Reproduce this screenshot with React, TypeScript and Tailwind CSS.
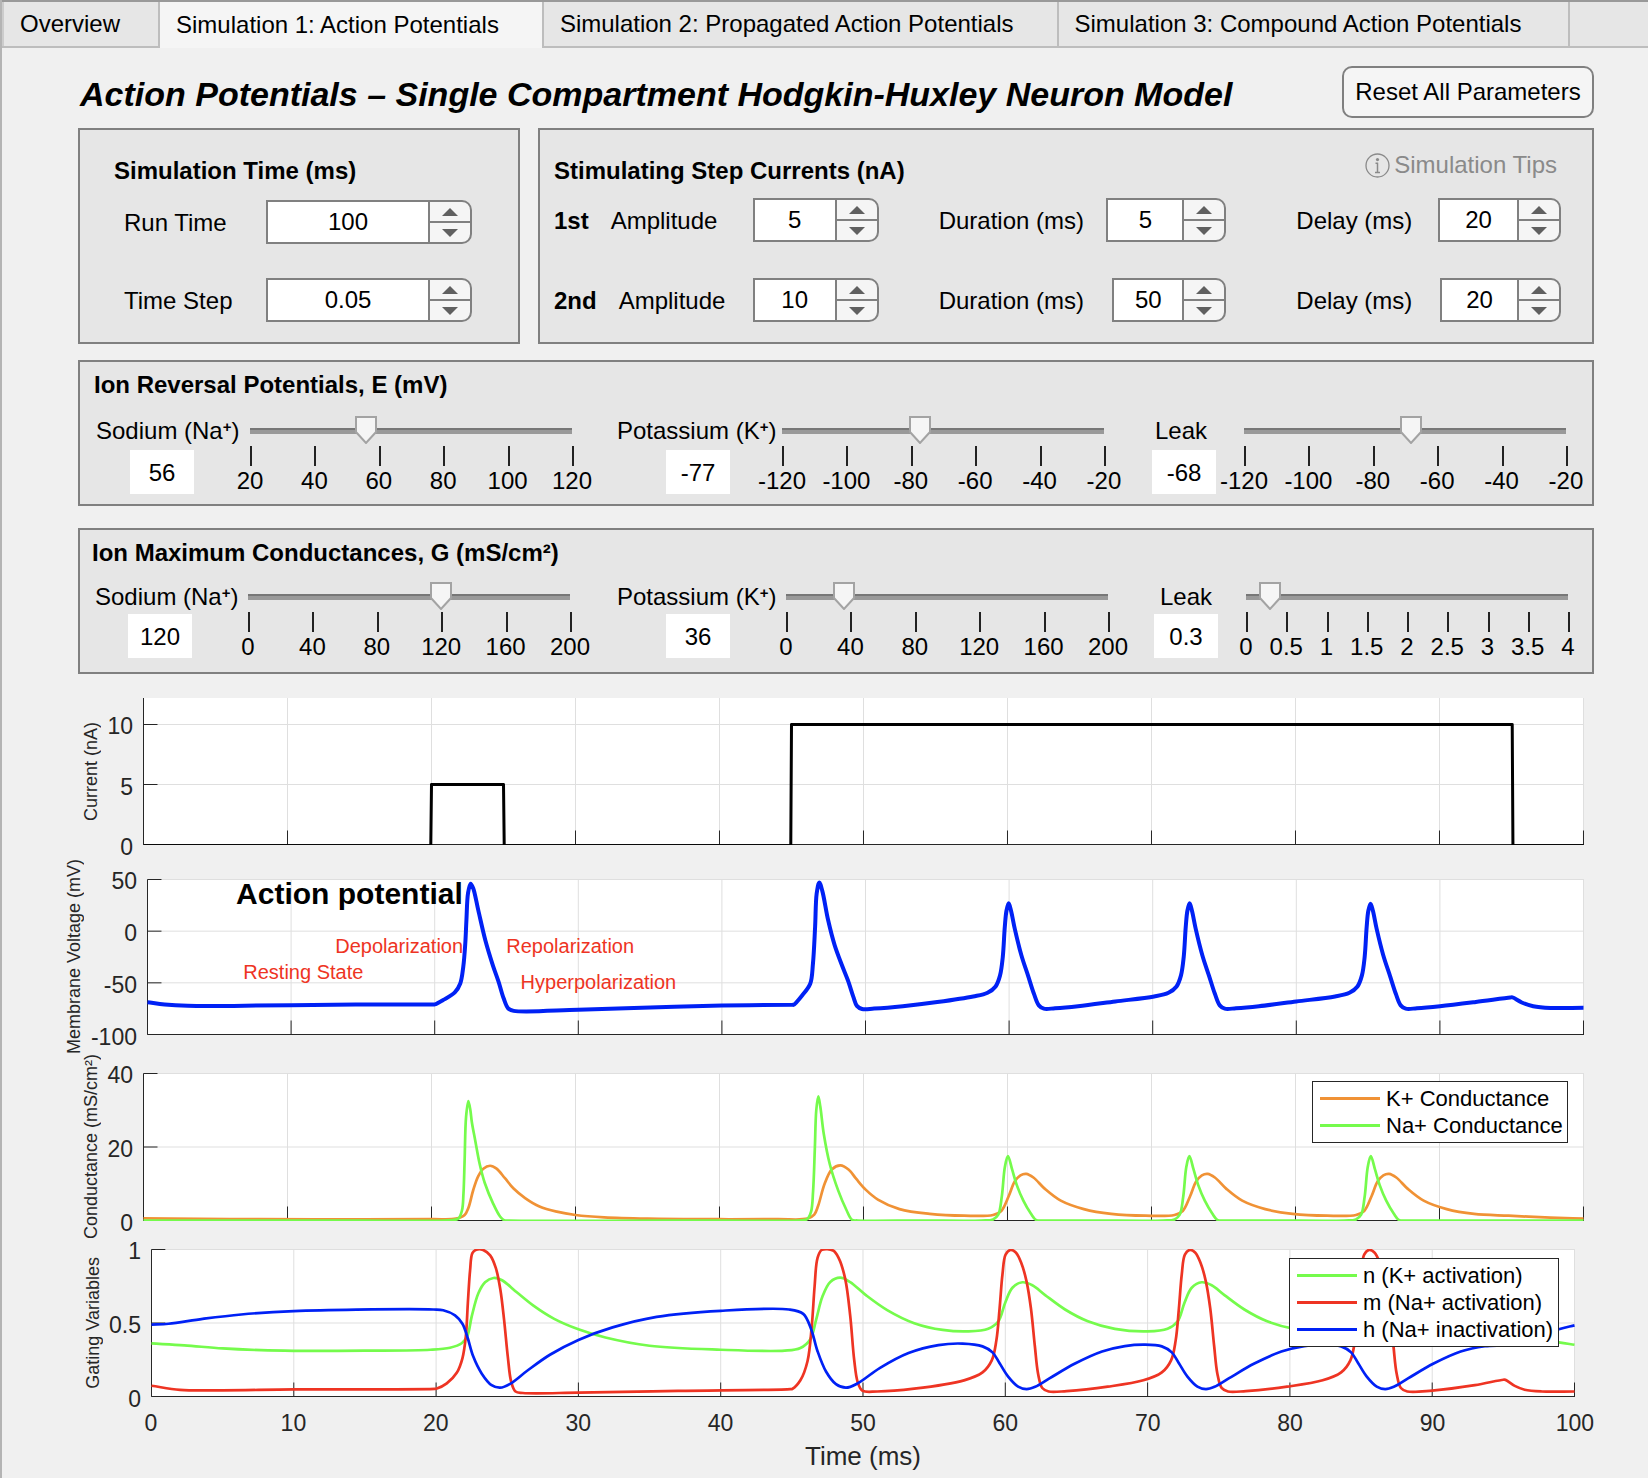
import { useId, useState } from "react";
import type { ReactNode } from "react";

type Point = [number, number];

/* ------------------------------------------------------------------ */
/* Controls                                                            */
/* ------------------------------------------------------------------ */

function Spinner({ id, label, initial, step = 1, width }: { id: string; label: string; initial: number; step?: number; width: string }) {
  const [value, setValue] = useState(initial);
  const change = (delta: number) => setValue((v) => Number((v + delta).toFixed(4)));
  return (
    <div className={`flex h-11 shrink-0 overflow-hidden rounded-r-[10px] border-2 border-[#808080] bg-[#f5f5f5] ${width}`}>
      <input
        id={id}
        type="text"
        inputMode="decimal"
        value={value}
        onChange={(e) => setValue(Number(e.target.value) || 0)}
        className="min-w-0 flex-1 bg-white text-center outline-none"
      />
      <div className="flex w-[42px] flex-col border-l-2 border-[#808080]">
        <button type="button" aria-label={`Increase ${label}`} onClick={() => change(step)} className="flex flex-1 items-center justify-center border-b-2 border-[#808080]">
          <svg width="16" height="8" viewBox="0 0 16 8" aria-hidden="true">
            <path d="M8 0 16 8H0Z" fill="#606060" />
          </svg>
        </button>
        <button type="button" aria-label={`Decrease ${label}`} onClick={() => change(-step)} className="flex flex-1 items-center justify-center">
          <svg width="16" height="8" viewBox="0 0 16 8" aria-hidden="true">
            <path d="M0 0H16L8 8Z" fill="#606060" />
          </svg>
        </button>
      </div>
    </div>
  );
}

function Slider({
  id,
  name,
  min,
  max,
  value,
  step,
  ticks,
  onChange,
}: {
  id: string;
  name: string;
  min: number;
  max: number;
  value: number;
  step: number;
  ticks: number[];
  onChange: (v: number) => void;
}) {
  const share = ((value - min) / (max - min)) * 100;
  return (
    <div className="min-w-0">
      <div className="relative h-7 pt-3">
        <div className="h-1.5 border-t-2 border-[#777777] bg-[#999999]" />
        <svg
          className="pointer-events-none absolute top-0 -ml-[11px]"
          style={{ left: `${share}%` }}
          width="22"
          height="28"
          viewBox="0 0 22 28"
          aria-hidden="true"
        >
          <path d="M1 1H21V16L11 27 1 16Z" fill="#f5f5f5" stroke="#a3a3a3" strokeWidth="2" />
        </svg>
        <input
          id={id}
          aria-label={`${name} slider`}
          type="range"
          min={min}
          max={max}
          step={step}
          value={value}
          onChange={(e) => onChange(Number(e.target.value))}
          className="absolute inset-x-0 top-0 h-7 cursor-pointer appearance-none bg-transparent [&::-webkit-slider-thumb]:h-7 [&::-webkit-slider-thumb]:w-5 [&::-webkit-slider-thumb]:appearance-none [&::-webkit-slider-thumb]:bg-transparent"
        />
      </div>
      <div className="-mr-0.5 flex justify-between pt-0.5">
        {ticks.map((t) => (
          <div key={t} className="flex w-0.5 flex-col items-start">
            <span className="h-5 w-0.5 bg-[#222222]" />
            <span className="flex h-[30px] w-0 items-center justify-center whitespace-nowrap">{t}</span>
          </div>
        ))}
      </div>
    </div>
  );
}

interface Ion {
  label: ReactNode;
  name: string;
  initial: number;
  min: number;
  max: number;
  step: number;
  ticks: number[];
  colClass: string;
  boxClass: string;
}

function IonControl({ ion }: { ion: Ion }) {
  const id = useId();
  const [value, setValue] = useState(ion.initial);
  return (
    <>
      <div className={`flex flex-col ${ion.colClass}`}>
        <label htmlFor={`${id}v`} className="flex h-[30px] items-center whitespace-nowrap">
          {ion.label}
        </label>
        <input
          id={`${id}v`}
          type="text"
          value={value}
          onChange={(e) => setValue(Number(e.target.value) || 0)}
          className={`h-11 w-16 bg-white pt-0.5 text-center outline-none ${ion.boxClass}`}
        />
      </div>
      <Slider id={`${id}s`} name={ion.name} min={ion.min} max={ion.max} step={ion.step} value={value} ticks={ion.ticks} onChange={setValue} />
    </>
  );
}

const sodium = (
  <span>
    Sodium (Na<sup className="text-[15px] font-bold">+</sup>)
  </span>
);
const potassium = (
  <span>
    Potassium (K<sup className="text-[15px] font-bold">+</sup>)
  </span>
);

const negTicks = [-120, -100, -80, -60, -40, -20];
const condTicks = [0, 40, 80, 120, 160, 200];

const reversal: Ion[] = [
  { label: sodium, name: "Sodium reversal potential", initial: 56, min: 20, max: 120, step: 1, ticks: [20, 40, 60, 80, 100, 120], colClass: "", boxClass: "mt-1 ml-[34px]" },
  { label: potassium, name: "Potassium reversal potential", initial: -77, min: -120, max: -20, step: 1, ticks: negTicks, colClass: "pl-[45px]", boxClass: "mt-1 ml-[49px]" },
  { label: <span className="pl-[3px]">Leak</span>, name: "Leak reversal potential", initial: -68, min: -120, max: -20, step: 1, ticks: negTicks, colClass: "pl-12", boxClass: "mt-1" },
];

const conductance: Ion[] = [
  { label: sodium, name: "Sodium conductance", initial: 120, min: 0, max: 200, step: 1, ticks: condTicks, colClass: "", boxClass: "mt-0.5 ml-[33px]" },
  { label: potassium, name: "Potassium conductance", initial: 36, min: 0, max: 200, step: 1, ticks: condTicks, colClass: "pl-[47px]", boxClass: "mt-0.5 ml-[49px]" },
  { label: "Leak", name: "Leak conductance", initial: 0.3, min: 0, max: 4, step: 0.1, ticks: [0, 0.5, 1, 1.5, 2, 2.5, 3, 3.5, 4], colClass: "items-center pl-8 pr-[14px]", boxClass: "mt-0.5" },
];

/* ------------------------------------------------------------------ */
/* Traces: time in ms against value                                    */
/* ------------------------------------------------------------------ */

const PERIOD = 12.6;
const repeat = (pts: Point[], count: number): Point[] =>
  Array.from({ length: count }).flatMap((_, i) => pts.map(([t, v]): Point => [t + i * PERIOD, v]));

const current: Point[] = [
  [0, -0.1], [19.95, -0.1], [20, 5], [25, 5], [25.05, -0.1], [44.95, -0.1], [45, 10], [95.05, 10], [95.1, -0.1], [100, -0.1],
];

const voltage: Point[] = [
  [0, -68.7], [1.2, -70.9], [2.8, -72.2], [6, -72.3], [10, -71.6], [14.5, -71], [19.9, -71], [20, -70.9], [20.6, -66.5], [21.4, -59.3],
  [21.78, -50.6], [21.99, -34.4], [22.13, -11.8], [22.21, 10.9], [22.32, 36.7], [22.5, 46], [22.68, 41.6], [23.03, 20.6],
  [23.53, -9], [24.05, -33], [24.45, -49], [24.8, -65], [25.12, -74.8], [25.5, -77.1], [30, -76.1], [35, -73.9],
  [40, -72], [44.9, -71.3], [45, -71.2], [45.6, -62], [46.15, -50.9], [46.34, -31.5], [46.49, 4], [46.6, 36.4], [46.78, 47.1], [46.99, 39],
  [47.4, 10.5], [47.85, -13.5], [48.36, -33], [48.78, -47.7], [49.16, -63.8], [49.4, -72.3], [49.76, -75.3], [50.6, -74.9],
  [52.6, -72.6], [55, -68.6],
  ...repeat(
    [
      [57.5, -63.2], [58.5, -59.6], [59.06, -53.5], [59.37, -42.8], [59.56, -25], [59.7, 4], [59.82, 20], [59.97, 27],
      [60.13, 20], [60.4, 2], [60.85, -23], [61.33, -43.5], [61.73, -60.6], [62.07, -71.8], [62.42, -75], [63.2, -74.6],
      [64.8, -72.6], [67.4, -68],
    ],
    2,
  ),
  [82.7, -63.2], [83.7, -59.6], [84.26, -53.5], [84.57, -42.8], [84.76, -25], [84.9, 4], [85.02, 20], [85.17, 26.5],
  [85.33, 20], [85.6, 2], [86.05, -23], [86.53, -43.5], [86.93, -60.6], [87.27, -71.8], [87.62, -75], [88.4, -74.6],
  [90, -72.6], [92.5, -68.5], [94.9, -64.2], [95.05, -64.1], [95.7, -69], [96.5, -72.6], [97.7, -74.3], [100, -74.2],
];

const sodiumG: Point[] = [
  [0, 0], [15, 0], [21.2, 0.05], [21.86, 0.5], [22.12, 2.8], [22.22, 7.3], [22.3, 16.4], [22.4, 28.2], [22.56, 32.5], [22.7, 30],
  [22.8, 26.8], [23.03, 21.9], [23.35, 15.3], [23.7, 10.2], [24.28, 4.6], [24.76, 1.1], [25.04, 0.1], [25.4, 0], [40, 0], [45.7, 0.05],
  [46.1, 0.4], [46.36, 2.4], [46.5, 8], [46.62, 19.5], [46.72, 30], [46.86, 33.8], [47, 31], [47.24, 23.6], [47.66, 15.3], [48.24, 8.2],
  [48.8, 3], [49.2, 0.2], [49.6, 0], [54, 0],
  ...repeat(
    [
      [58.2, 0], [59, 0.3], [59.36, 1.6], [59.6, 6.4], [59.82, 14.6], [60.03, 17.5], [60.32, 13.9], [60.64, 9.7], [61.1, 5.4],
      [61.62, 1.9], [62, 0.1], [62.6, 0], [66, 0],
    ],
    3,
  ),
  [100, 0],
];

const potassiumG: Point[] = [
  [0, 0.6], [6, 0.4], [12, 0.3], [20, 0.35], [21.7, 0.5], [22.3, 1.5], [22.56, 3.4], [22.9, 8.3], [23.24, 12], [23.6, 14.1], [24.07, 14.9],
  [24.52, 14.1], [25.1, 11.5], [25.7, 8.7], [26.5, 6.1], [27.5, 3.8], [28.7, 2.4], [30, 1.5], [32, 0.85], [35, 0.5], [40, 0.35],
  [44, 0.35], [46.1, 0.5], [46.58, 1.6], [46.85, 4], [47.3, 10], [47.8, 13.9], [48.4, 15], [48.98, 13.8], [49.5, 11.3], [50.15, 8.4],
  [51, 5.7], [52.5, 3.1], [54.6, 1.8], [57, 1.3],
  ...repeat(
    [
      [59, 1.5], [59.57, 2.6], [60.08, 6.6], [60.5, 10.6], [60.9, 12.3], [61.3, 12.7], [61.8, 11.7], [62.6, 8.6], [63.7, 5.4],
      [65.3, 3.1], [67.2, 1.8], [69.6, 1.3],
    ],
    3,
  ),
  [97.7, 0.8], [100, 0.5],
];

const gateM: Point[] = [
  [0, 0.073], [2, 0.045], [5, 0.042], [10, 0.048], [19.9, 0.052], [20.05, 0.054], [20.75, 0.089], [21.45, 0.161], [21.85, 0.26],
  [22.09, 0.41], [22.23, 0.634], [22.39, 0.86], [22.55, 0.975], [22.82, 0.998], [23.3, 0.997], [23.8, 0.96], [24.2, 0.873],
  [24.52, 0.725], [24.78, 0.52], [25.04, 0.27], [25.28, 0.099], [25.58, 0.034], [26.1, 0.024], [30, 0.026], [37, 0.038],
  [44.9, 0.05], [45.05, 0.053], [45.6, 0.11], [46.1, 0.24], [46.4, 0.48], [46.6, 0.75], [46.8, 0.94], [47.1, 0.997], [47.9, 0.993],
  [48.3, 0.94], [48.75, 0.8], [49.1, 0.55], [49.38, 0.25], [49.62, 0.1], [49.95, 0.04], [51, 0.034], [53.6, 0.053],
  ...repeat(
    [
      [57.1, 0.11], [58.4, 0.164], [59.05, 0.246], [59.37, 0.38], [59.6, 0.6], [59.8, 0.83], [60.02, 0.965], [60.36, 0.997],
      [60.74, 0.98], [61.13, 0.907], [61.5, 0.78], [61.8, 0.6], [62.08, 0.34], [62.3, 0.157], [62.6, 0.058], [63.05, 0.034],
      [64.3, 0.037], [67.2, 0.067],
    ],
    2,
  ),
  [82.3, 0.11], [83.6, 0.164], [84.25, 0.246], [84.57, 0.38], [84.8, 0.6], [85, 0.83], [85.22, 0.965], [85.56, 0.997],
  [85.94, 0.98], [86.33, 0.907], [86.7, 0.78], [87, 0.6], [87.28, 0.34], [87.5, 0.157], [87.8, 0.058], [88.25, 0.034],
  [90, 0.04], [93, 0.077], [95, 0.114], [95.15, 0.113], [95.8, 0.072], [96.5, 0.046], [97.7, 0.034], [100, 0.034],
];

const gateN: Point[] = [
  [0, 0.361], [2.3, 0.348], [5, 0.327], [7.7, 0.315], [10, 0.311], [15, 0.312], [19.6, 0.318], [20.98, 0.332], [21.8, 0.362], [22.2, 0.413],
  [22.5, 0.543], [22.97, 0.702], [23.44, 0.777], [24.03, 0.806], [24.6, 0.793], [25.67, 0.709], [26.84, 0.618], [28.3, 0.528],
  [30, 0.457], [31.9, 0.401], [35, 0.345], [40, 0.318], [44.5, 0.312], [45.6, 0.33], [46.3, 0.39], [46.7, 0.52], [47.15, 0.68], [47.7, 0.779],
  [48.4, 0.808], [49.1, 0.778], [50.2, 0.69], [51.7, 0.588], [53.6, 0.499], [55.6, 0.453], [57.4, 0.443],
  ...repeat(
    [
      [58.8, 0.461], [59.5, 0.51], [60, 0.64], [60.5, 0.74], [61.2, 0.777], [61.9, 0.757], [62.8, 0.69], [64.2, 0.592],
      [65.8, 0.512], [67.7, 0.46], [70, 0.443],
    ],
    2,
  ),
  [84, 0.461], [84.7, 0.51], [85.2, 0.64], [85.7, 0.74], [86.4, 0.777], [87.1, 0.757], [88, 0.69], [89.4, 0.592],
  [91, 0.512], [92.8, 0.464], [95.5, 0.425], [98.9, 0.368], [100, 0.352],
];

const gateH: Point[] = [
  [0, 0.489], [1.2, 0.495], [3.6, 0.528], [6.3, 0.558], [10, 0.581], [14.4, 0.591], [19.8, 0.592], [20.5, 0.587], [21.33, 0.552],
  [21.85, 0.495], [22.2, 0.405], [22.6, 0.275], [23.2, 0.157], [23.9, 0.077], [24.5, 0.06], [25.2, 0.086], [26.4, 0.175],
  [28, 0.284], [30, 0.385], [32.4, 0.47], [35.5, 0.542], [40, 0.583], [44.8, 0.592], [45.8, 0.562], [46.35, 0.46], [46.8, 0.31],
  [47.4, 0.17], [48.1, 0.084], [48.8, 0.06], [49.6, 0.088], [51.2, 0.195], [53.2, 0.296], [55.3, 0.35], [57, 0.36],
  ...repeat(
    [
      [58.4, 0.341], [59.1, 0.3], [59.6, 0.226], [60.2, 0.135], [60.9, 0.067], [61.5, 0.05], [62.1, 0.066], [63.1, 0.123],
      [64.9, 0.224], [66.8, 0.306], [68.4, 0.343], [69.8, 0.353],
    ],
    2,
  ),
  [83.6, 0.341], [84.3, 0.3], [84.8, 0.226], [85.4, 0.135], [86.1, 0.067], [86.7, 0.05], [87.3, 0.066], [88.3, 0.123],
  [90.1, 0.224], [92, 0.306], [93.7, 0.342], [95.4, 0.352], [97, 0.39], [98.9, 0.457], [100, 0.484],
];

/** Centripetal Catmull-Rom curve through points already in drawing units. */
function smoothPath(pts: Point[]): string {
  const n = pts.length;
  const mirror = (a: Point, b: Point): Point => [2 * a[0] - b[0], 2 * a[1] - b[1]];
  const all = [mirror(pts[0], pts[1]), ...pts, mirror(pts[n - 1], pts[n - 2])];
  const root = (a: Point, b: Point) => Math.sqrt(Math.hypot(b[0] - a[0], b[1] - a[1]));
  const handle = (far: Point, near: Point, next: Point): Point => {
    const a = root(far, near);
    const b = root(near, next);
    const k = 2 * a * a + 3 * a * b + b * b;
    const q = 3 * a * (a + b);
    return [(a * a * next[0] - b * b * far[0] + k * near[0]) / q, (a * a * next[1] - b * b * far[1] + k * near[1]) / q];
  };
  const text = (p: Point) => `${p[0].toFixed(2)} ${p[1].toFixed(2)}`;
  let d = `M${text(pts[0])}`;
  for (let i = 1; i < n; i++) {
    const [p0, p1, p2, p3] = [all[i - 1], all[i], all[i + 1], all[i + 2]];
    d += `C${text(handle(p0, p1, p2))} ${text(handle(p3, p2, p1))} ${text(p2)}`;
  }
  return d;
}

/* ------------------------------------------------------------------ */
/* Charts                                                              */
/* ------------------------------------------------------------------ */

interface Series {
  points: Point[];
  color: string;
  weight: number;
  straight?: boolean;
}

const GREEN = "#75fb4c";
const RED = "#ee3423";
const BLUE = "#0021f5";
const ORANGE = "#f09235";
const VIEW = 1440;

function Chart({
  yLabel,
  ticks,
  min,
  height,
  top,
  series,
  rowClass,
  gutterClass,
  tickClass,
  children,
}: {
  yLabel: string;
  ticks: number[];
  min: number;
  height: number;
  top: number;
  series: Series[];
  rowClass: string;
  gutterClass: string;
  tickClass: string;
  children?: ReactNode;
}) {
  const base = height - 0.5;
  const high = ticks[0];
  const y = (v: number) => base - ((v - min) / (high - min)) * (base - top);
  const x = (t: number) => 0.5 + (t / 100) * (VIEW - 1);
  const times = [10, 20, 30, 40, 50, 60, 70, 80, 90, 100];
  return (
    <div className={`flex ${rowClass}`}>
      <div className={`flex shrink-0 justify-between pr-2.5 ${gutterClass}`}>
        <div className="flex w-[22px] items-center justify-center">
          <span className="shrink-0 rotate-180 text-lg leading-[22px] whitespace-nowrap [writing-mode:vertical-rl]">{yLabel}</span>
        </div>
        <div className={`-mb-0.5 flex flex-col justify-between text-right text-[23px] ${tickClass}`}>
          {ticks.map((t) => (
            <span key={t} className="flex h-0 items-center justify-end">
              {t}
            </span>
          ))}
        </div>
      </div>
      <div className="relative min-w-0 flex-1">
        <svg className="block h-full w-full bg-white" viewBox={`0 0 ${VIEW} ${height}`} preserveAspectRatio="none" role="img" aria-label={yLabel}>
          <g stroke="#dfdfdf" strokeWidth="1">
            {times.map((t) => (
              <path key={t} d={`M${x(t)} 0V${height}`} vectorEffect="non-scaling-stroke" />
            ))}
            {ticks.map((t) => (
              <path key={t} d={`M0 ${y(t)}H${VIEW}`} vectorEffect="non-scaling-stroke" />
            ))}
          </g>
          <g stroke="#262626" strokeWidth="1" fill="none">
            <path d={`M0.5 ${y(high) < 10 ? y(high) : 0}V${base}H${VIEW}`} vectorEffect="non-scaling-stroke" />
            {times.map((t) => (
              <path key={t} d={`M${x(t)} ${base}v-14`} vectorEffect="non-scaling-stroke" />
            ))}
            {ticks.map((t) => (
              <path key={t} d={`M0.5 ${y(t)}h14`} vectorEffect="non-scaling-stroke" />
            ))}
          </g>
          {series.map((s, i) => {
            const pts = s.points.map(([t, v]): Point => [x(t), y(v)]);
            return (
              <path
                key={i}
                d={s.straight ? `M${pts.map((p) => p.join(" ")).join("L")}` : smoothPath(pts)}
                fill="none"
                stroke={s.color}
                strokeWidth={s.weight}
                strokeLinejoin="round"
                vectorEffect="non-scaling-stroke"
              />
            );
          })}
        </svg>
        {children}
      </div>
    </div>
  );
}

function Legend({ items, className }: { items: { label: string; color: string }[]; className: string }) {
  return (
    <ul className={`absolute right-4 border border-[#262626] bg-white py-[3px] pl-[7px] text-[22px] leading-[27px] text-black ${className}`}>
      {items.map((item) => (
        <li key={item.label} className="flex h-[27px] items-center gap-1.5 whitespace-nowrap">
          <svg width="60" height="4" viewBox="0 0 60 4" aria-hidden="true">
            <path d="M0 1.5H60" stroke={item.color} strokeWidth="3" />
          </svg>
          {item.label}
        </li>
      ))}
    </ul>
  );
}

/* ------------------------------------------------------------------ */
/* Page                                                                */
/* ------------------------------------------------------------------ */

const tabs = [
  { label: "Overview", className: "border-b-2 pr-[38px]" },
  { label: "Simulation 1: Action Potentials", className: "bg-[#f5f5f5] pr-[43px]" },
  { label: "Simulation 2: Propagated Action Potentials", className: "border-b-2 pr-[43px]" },
  { label: "Simulation 3: Compound Action Potentials", className: "border-b-2 pr-[47px]" },
];

const steps = [
  { name: "1st", amplitude: 5, duration: 5, delay: 20, durationWidth: "w-[120px]", delayWidth: "w-[123px]" },
  { name: "2nd", amplitude: 10, duration: 50, delay: 20, durationWidth: "w-[114px]", delayWidth: "w-[121px]" },
];

const panel = "border-2 border-[#808080] bg-[#e6e6e6]";

export default function App() {
  return (
    <div className="min-h-screen border-l-2 border-[#b4b4b4] bg-[#f0f0f0] font-['Liberation_Sans',Arial,sans-serif] text-2xl leading-7 text-black">
      <nav role="tablist" className="flex h-12 border-t-2 border-[#999999] bg-[#e6e6e6]">
        <div className="w-0.5 border-b-2 border-[#bdbdbd] bg-[#cccccc]" />
        {tabs.map((tab, i) => (
          <button
            key={tab.label}
            type="button"
            role="tab"
            aria-selected={i === 1}
            className={`border-r-2 border-[#bdbdbd] pl-4 whitespace-nowrap ${tab.className}`}
          >
            {tab.label}
          </button>
        ))}
        <div className="flex-1 border-b-2 border-[#bdbdbd]" />
      </nav>

      <main className="pr-[54px] pl-[76px]">
        <header className="flex items-center justify-between pt-[18px]">
          <h1 className="pt-1 pl-0.5 text-[34px] leading-10 font-bold whitespace-nowrap italic">
            Action Potentials – Single Compartment Hodgkin-Huxley Neuron Model
          </h1>
          <button type="button" className="h-[52px] w-[252px] shrink-0 rounded-[10px] border-2 border-[#808080] bg-[#f5f5f5] whitespace-nowrap">
            Reset All Parameters
          </button>
        </header>

        <div className="mt-2.5 grid grid-cols-[442fr_1056fr] gap-[18px]">
          <section className={`min-h-[216px] pt-[27px] pr-[46px] pl-[34px] ${panel}`}>
            <h2 className="font-bold">Simulation Time (ms)</h2>
            <div className="mt-[15px] flex items-center justify-between pl-[10px]">
              <label htmlFor="run-time" className="pt-0.5">
                Run Time
              </label>
              <Spinner id="run-time" label="Run Time" initial={100} width="w-[206px]" />
            </div>
            <div className="mt-[34px] flex items-center justify-between pl-[10px]">
              <label htmlFor="time-step" className="pt-0.5">
                Time Step
              </label>
              <Spinner id="time-step" label="Time Step" initial={0.05} step={0.01} width="w-[206px]" />
            </div>
          </section>

          <section className={`min-h-[216px] pt-[20px] pr-[31px] pl-[14px] ${panel}`}>
            <div className="flex items-start justify-between">
              <h2 className="pt-[7px] font-bold">Stimulating Step Currents (nA)</h2>
              <button type="button" className="flex items-center gap-1 pt-px pr-1 text-[#8a8a8a]">
                <svg width="25" height="25" viewBox="0 0 25 25" fill="none" aria-hidden="true">
                  <circle cx="12.5" cy="12.5" r="11.5" stroke="#8a8a8a" strokeWidth="1.3" />
                  <circle cx="12.5" cy="6.6" r="1.6" fill="#8a8a8a" />
                  <path d="M10.5 10.2H13.2M12.5 10V19.6M10 19.6H15" stroke="#8a8a8a" strokeWidth="1.5" />
                </svg>
                Simulation Tips
              </button>
            </div>
            <div className="mt-[13px] flex flex-col gap-9">
              {steps.map((s) => (
                <div key={s.name} className="grid grid-cols-[325fr_348fr_335fr]">
                  <div className="flex items-center justify-between">
                    <div className="flex gap-[22px] pt-0.5">
                      <b>{s.name}</b>
                      <label htmlFor={`${s.name}-amplitude`}>Amplitude</label>
                    </div>
                    <Spinner id={`${s.name}-amplitude`} label={`${s.name} amplitude`} initial={s.amplitude} width="w-[126px]" />
                  </div>
                  <div className="flex items-center justify-between pl-[60px]">
                    <label htmlFor={`${s.name}-duration`} className="pt-0.5">
                      Duration (ms)
                    </label>
                    <Spinner id={`${s.name}-duration`} label={`${s.name} duration`} initial={s.duration} width={s.durationWidth} />
                  </div>
                  <div className="flex items-center justify-between pl-[70px]">
                    <label htmlFor={`${s.name}-delay`} className="pt-0.5">
                      Delay (ms)
                    </label>
                    <Spinner id={`${s.name}-delay`} label={`${s.name} delay`} initial={s.delay} width={s.delayWidth} />
                  </div>
                </div>
              ))}
            </div>
          </section>
        </div>

        <section className={`mt-4 min-h-[146px] pt-[9px] ${panel}`}>
          <h2 className="pl-[14px] font-bold">Ion Reversal Potentials, E (mV)</h2>
          <div className="mt-[17px] grid grid-cols-[154px_1fr_210px_1fr_140px_1fr] pr-[26px] pl-4">
            {reversal.map((ion) => (
              <IonControl key={ion.name} ion={ion} />
            ))}
          </div>
        </section>

        <section className={`mt-[22px] min-h-[146px] pt-[9px] ${panel}`}>
          <h2 className="pl-[12px] font-bold">Ion Maximum Conductances, G (mS/cm²)</h2>
          <div className="mt-[15px] grid grid-cols-[153px_1fr_216px_1fr_138px_1fr] pr-6 pl-[15px]">
            {conductance.map((ion) => (
              <IonControl key={ion.name} ion={ion} />
            ))}
          </div>
        </section>
      </main>

      <section className="mt-6 pr-16 pl-[58px] text-[#262626]">
        <Chart
          yLabel="Current (nA)"
          ticks={[10, 5, 0]}
          min={0}
          height={147}
          top={26.5}
          rowClass="h-[147px]"
          gutterClass="w-[83px] pl-5"
          tickClass="pt-7"
          series={[{ points: current, color: "#000000", weight: 3, straight: true }]}
        />
        <Chart
          yLabel="Membrane Voltage (mV)"
          ticks={[50, 0, -50, -100]}
          min={-100}
          height={156}
          top={0.5}
          rowClass="mt-[34px] h-[156px]"
          gutterClass="w-[87px] pl-[3px]"
          tickClass="pt-0.5"
          series={[{ points: voltage, color: BLUE, weight: 4 }]}
        >
          <p className="absolute top-0 left-[6.2%] text-[30px] leading-[30px] font-bold whitespace-nowrap text-black">Action potential</p>
          <p className="absolute top-[55px] left-[13.1%] text-xl leading-6 text-[#ee3423]">Depolarization</p>
          <p className="absolute top-[81px] left-[6.7%] text-xl leading-6 text-[#ee3423]">Resting State</p>
          <p className="absolute top-[55px] left-[25%] text-xl leading-6 text-[#ee3423]">Repolarization</p>
          <p className="absolute top-[91px] left-[26%] text-xl leading-6 text-[#ee3423]">Hyperpolarization</p>
        </Chart>
        <Chart
          yLabel="Conductance (mS/cm²)"
          ticks={[40, 20, 0]}
          min={0}
          height={148}
          top={0.5}
          rowClass="mt-[38px] h-[148px]"
          gutterClass="w-[83px] pl-5"
          tickClass="pt-0.5"
          series={[
            { points: potassiumG, color: ORANGE, weight: 2.7 },
            { points: sodiumG, color: GREEN, weight: 2.7 },
          ]}
        >
          <Legend
            className="top-2 w-[256px]"
            items={[
              { label: "K+ Conductance", color: ORANGE },
              { label: "Na+ Conductance", color: GREEN },
            ]}
          />
        </Chart>
        <Chart
          yLabel="Gating Variables"
          ticks={[1, 0.5, 0]}
          min={0}
          height={148}
          top={0.5}
          rowClass="mt-7 mr-[9px] h-[148px]"
          gutterClass="w-[91px] pl-[22px]"
          tickClass="pt-0.5"
          series={[
            { points: gateN, color: GREEN, weight: 2.7 },
            { points: gateM, color: RED, weight: 2.7 },
            { points: gateH, color: BLUE, weight: 2.7 },
          ]}
        >
          <Legend
            className="top-[9px] w-[270px]"
            items={[
              { label: "n (K+ activation)", color: GREEN },
              { label: "m (Na+ activation)", color: RED },
              { label: "h (Na+ inactivation)", color: BLUE },
            ]}
          />
        </Chart>
        <div className="mt-3 mr-[9px] ml-[91px]">
          <div className="flex h-7 justify-between text-[23px]">
            {[0, 10, 20, 30, 40, 50, 60, 70, 80, 90, 100].map((t) => (
              <span key={t} className="flex w-0 items-center justify-center">
                {t}
              </span>
            ))}
          </div>
          <p className="mt-[3px] text-center text-[26px] leading-8">Time (ms)</p>
        </div>
      </section>
    </div>
  );
}
